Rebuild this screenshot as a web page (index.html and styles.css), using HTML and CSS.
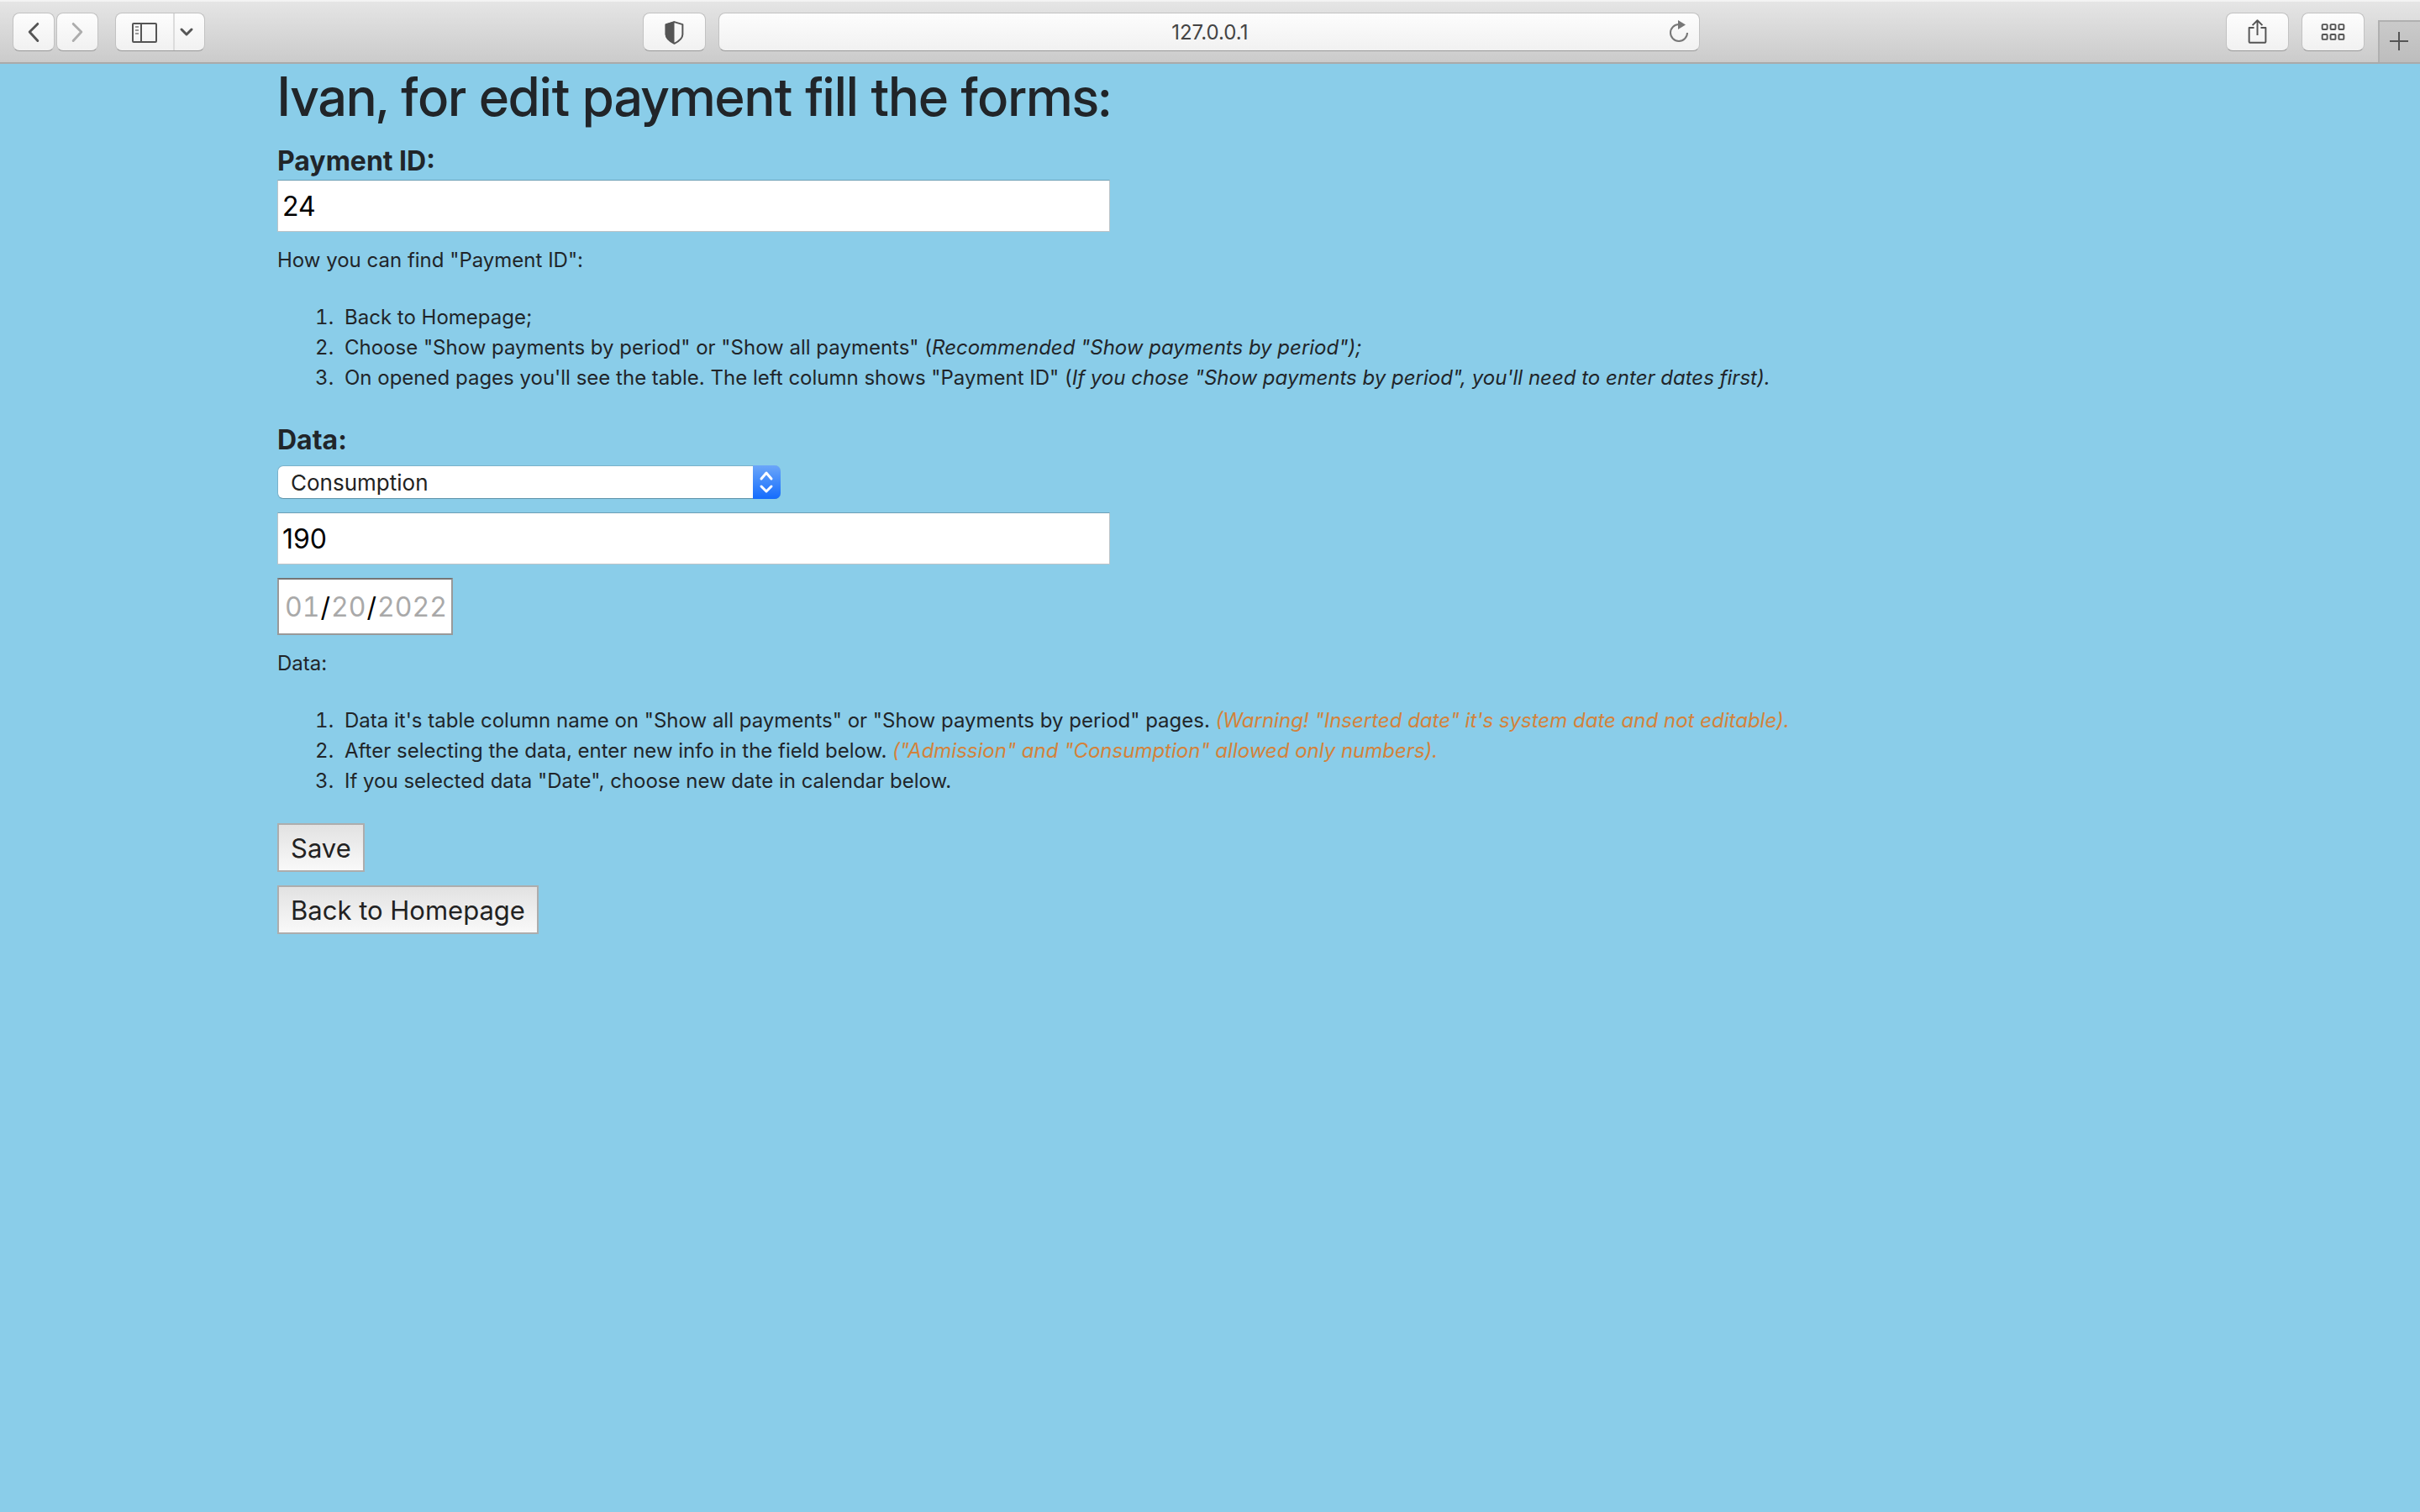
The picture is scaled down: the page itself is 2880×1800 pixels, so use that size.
FILE: index.html
```html
<!DOCTYPE html>
<html lang="en-US">
<head>
<meta charset="utf-8">
<meta name="viewport" content="width=device-width, initial-scale=1">
<title>Edit payment</title>
<link rel="stylesheet" href="styles.css">
</head>
<body>
<header class="toolbar">
  <div class="toolbar-main">
    <div class="nav-group">
      <button class="tool nav" type="button" aria-label="Back"><svg width="50" height="44" viewBox="0 0 50 44" fill="none" stroke="#555" stroke-width="3" stroke-linecap="round" stroke-linejoin="round"><path d="M30 12 20 22 30 33"/></svg></button>
      <button class="tool nav" type="button" aria-label="Forward"><svg width="50" height="44" viewBox="0 0 50 44" fill="none" stroke="#adadad" stroke-width="3" stroke-linecap="round" stroke-linejoin="round"><path d="M20 12 30 22 20 33"/></svg></button>
    </div>
    <div class="split">
      <button class="split-part" type="button" aria-label="Show sidebar"><svg width="68" height="44" viewBox="0 0 68 44" fill="none" stroke="#555" stroke-width="2"><rect x="20" y="12" width="28" height="22" rx="1"/><path d="M30 12V34"/><path d="M23 16H27M23 20H27M23 24H27" stroke="#999"/></svg></button>
      <button class="split-part" type="button" aria-label="Sidebar options"><svg width="36" height="44" viewBox="0 0 36 44" fill="none" stroke="#555" stroke-width="3" stroke-linecap="round" stroke-linejoin="round"><path d="M8 19 14 25 20 19"/></svg></button>
    </div>
    <span class="space-before"></span>
    <button class="tool wide" type="button" aria-label="Privacy report"><svg width="74" height="44" viewBox="0 0 74 44"><path d="M37 10 27 13V25Q27 31 37 36Q47 31 47 25V13Z" fill="none" stroke="#555" stroke-width="2" stroke-linejoin="round"/><path d="M37 9 26 13V25Q26 31 37 36Z" fill="#555"/></svg></button>
    <div class="address">
      <input class="address-input" type="text" value="127.0.0.1" aria-label="Address">
      <button class="reload" type="button" aria-label="Reload"><svg width="30" height="34" viewBox="0 0 30 34"><path d="M15 8A10 10 0 1 0 25 18" fill="none" stroke="#777" stroke-width="2"/><path d="M14 3V14L23 8.500Z" fill="#777"/></svg></button>
    </div>
    <span class="space-after"></span>
    <div class="actions">
      <button class="tool wide" type="button" aria-label="Share"><svg width="74" height="44" viewBox="0 0 74 44" fill="none" stroke="#555" stroke-width="2"><path d="M33 17H27V34Q27 35 28 35H46Q47 35 47 34V17H41M37 26V8M31 14 37 8 43 14" stroke-linejoin="round"/></svg></button>
      <button class="tool wide" type="button" aria-label="Tab overview"><svg width="74" height="44" viewBox="0 0 74 44" fill="none" stroke="#555" stroke-width="2"><rect x="24" y="13" width="6" height="6" rx="1"/><rect x="34" y="13" width="6" height="6" rx="1"/><rect x="44" y="13" width="6" height="6" rx="1"/><rect x="24" y="25" width="6" height="6" rx="1"/><rect x="34" y="25" width="6" height="6" rx="1"/><rect x="44" y="25" width="6" height="6" rx="1"/></svg></button>
    </div>
  </div>
  <button class="new-tab" type="button" aria-label="New tab"><svg width="48" height="48" viewBox="0 0 48 48" fill="none" stroke="#555" stroke-width="2"><path d="M12 23H34M23 12V34"/></svg></button>
</header>

<main class="container">
  <h1 class="title">Ivan, for edit payment fill the forms:</h1>
  <form class="form">
    <label class="label" for="payment-id">Payment ID:</label>
    <input class="text-field" id="payment-id" type="text" value="24">
    <p class="hint">How you can find "Payment ID":</p>
    <ol class="steps">
      <li>Back to Homepage;</li>
      <li>Choose "Show payments by period" or "Show all payments" (<em>Recommended "Show payments by period");</em></li>
      <li>On opened pages you'll see the table. The left column shows "Payment ID" (<em>If you chose "Show payments by period", you'll need to enter dates first).</em></li>
    </ol>

    <label class="label label-data" for="column">Data:</label>
    <div class="select-wrap">
      <select class="select" id="column">
        <option>Admission</option>
        <option selected>Consumption</option>
        <option>Date</option>
      </select>
      <span class="select-arrows"><svg width="33" height="40" viewBox="0 0 33 40" fill="none" stroke="#fff" stroke-width="3" stroke-linecap="round" stroke-linejoin="round"><path d="M10 16 16 9 22 16M10 25 16 31 22 25"/></svg></span>
    </div>
    <input class="text-field" type="text" value="190" aria-label="New value">
    <input class="date-field" type="date" value="2022-01-20" aria-label="New date">
    <p class="hint">Data:</p>
    <ol class="steps">
      <li>Data it's table column name on "Show all payments" or "Show payments by period" pages. <em class="warning">(Warning! "Inserted date" it's system date and not editable).</em></li>
      <li>After selecting the data, enter new info in the field below. <em class="warning">("Admission" and "Consumption" allowed only numbers).</em></li>
      <li>If you selected data "Date", choose new date in calendar below.</li>
    </ol>
    <button class="button" type="submit">Save</button>
    <button class="button" type="button">Back to Homepage</button>
  </form>
</main>
</body>
</html>
```
FILE: styles.css
```css
* {
  box-sizing: border-box;
}

body {
  margin: 0;
  min-height: 100vh;
  background: #8acde9;
  color: #212529;
  font-family: Inter, "Liberation Sans", sans-serif;
  font-size: 24px;
  line-height: 36px;
}

button,
input,
select {
  margin: 0;
  font-family: inherit;
}

svg {
  display: block;
}

/* Browser toolbar */
.toolbar {
  display: flex;
  align-items: flex-end;
  height: 76px;
  border-top: 2px solid #f3f3f3;
  border-bottom: 2px solid #aaa;
  background: linear-gradient(#e5e5e5, #cbcbcb);
}

.toolbar-main {
  display: flex;
  flex: 1;
  align-items: center;
  height: 72px;
  min-width: 0;
  padding: 0 16px 0 15px;
}

.nav-group {
  display: flex;
  gap: 2px;
  margin-right: 20px;
}

.tool,
.split,
.address {
  height: 46px;
  border: 1px solid #c2c2c2;
  border-bottom-color: #999;
  border-radius: 8px;
  background: linear-gradient(#fdfdfd, #f1f1f1);
}

.tool {
  display: flex;
  flex: none;
  align-items: center;
  justify-content: center;
  padding: 0;
}

.nav {
  width: 50px;
}

.wide {
  width: 75px;
}

.split {
  display: flex;
  flex: none;
  width: 107px;
  overflow: hidden;
}

.split-part {
  padding: 0;
  border: 0;
  background: none;
}

.split-part + .split-part {
  border-left: 2px solid #dcdcdc;
}

.space-before {
  flex: 5;
}

.space-after {
  flex: 6;
}

.address {
  display: flex;
  flex: 0 1 1168px;
  align-items: center;
  min-width: 0;
  margin-left: 15px;
  padding: 0 9px 0 8px;
}

.address-input {
  flex: 1;
  min-width: 0;
  padding: 2px 0 0 32px;
  border: 0;
  background: none;
  color: #444;
  font-size: 24px;
  line-height: 36px;
  text-align: center;
}

.reload {
  padding: 0;
  border: 0;
  background: none;
}

.actions {
  display: flex;
  gap: 15px;
}

.new-tab {
  flex: none;
  width: 50px;
  height: 50px;
  padding: 0;
  border: 0;
  border-top: 2px solid #b0b0b0;
  border-left: 2px solid #b0b0b0;
  background: linear-gradient(#cacaca, #bdbdbd);
}

/* Page */
.container {
  max-width: 2280px;
  margin: 0 auto;
  padding: 0 30px;
}

.title {
  margin: 0 0 16px;
  font-family: "Inter Display", Roboto, sans-serif;
  font-size: 64px;
  font-weight: 500;
  line-height: 78px;
}

.form {
  display: flex;
  flex-direction: column;
  align-items: flex-start;
}

.label {
  font-size: 32px;
  font-weight: 700;
  line-height: 44px;
}

.label-data {
  margin: 2px 0 8px;
}

.text-field {
  width: 991px;
  max-width: 100%;
  height: 62px;
  margin-bottom: 16px;
  padding: 0 5px;
  border: 1px solid #bdc4c8;
  border-top-color: #6c9fb5;
  border-radius: 0;
  background: #fff;
  color: #000;
  font-size: 32px;
}

.hint {
  margin: 0 0 32px;
}

.steps {
  margin: 0 0 32px;
  padding-left: 80px;
}

.steps li::marker {
  content: counter(list-item) ".\a0\a0";
}

.warning {
  color: #d3823b;
}

.select-wrap {
  position: relative;
  width: 599px;
  max-width: 100%;
  margin-bottom: 16px;
}

.select {
  display: block;
  width: 100%;
  height: 40px;
  padding: 0 48px 0 15px;
  border: 1px solid #7ab2ca;
  border-bottom-color: #5c93aa;
  border-radius: 7px;
  background: #fff;
  color: #222;
  font-size: 26px;
  appearance: none;
}

.select-arrows {
  position: absolute;
  top: 0;
  right: 0;
  border-radius: 0 7px 7px 0;
  background: linear-gradient(#6ba6f9, #146cfd);
  pointer-events: none;
}

.date-field {
  width: 209px;
  height: 68px;
  margin-bottom: 16px;
  padding: 0 6px;
  border: 2px solid #999;
  border-top-color: #757575;
  border-radius: 0;
  background: #fff;
  color: #000;
  font-size: 32px;
  font-variant-numeric: tabular-nums;
}

.date-field::-webkit-calendar-picker-indicator {
  display: none;
}

.date-field::-webkit-datetime-edit-month-field,
.date-field::-webkit-datetime-edit-day-field,
.date-field::-webkit-datetime-edit-year-field {
  padding: 0 1px;
  color: #a9a9a9;
}

.button {
  height: 58px;
  margin-bottom: 16px;
  padding: 0 14px;
  border: 2px solid #adadad;
  border-radius: 0;
  background: linear-gradient(#e2e2e2, #f9f9f9);
  color: #222;
  font-size: 31px;
}
```
